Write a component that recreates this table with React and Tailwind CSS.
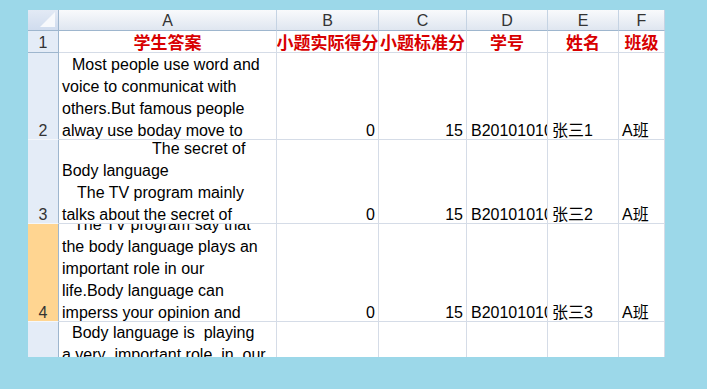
import React from "react";

const cols = ["A", "B", "C", "D", "E", "F"];
const heads = ["学生答案", "小题实际得分", "小题标准分", "学号", "姓名", "班级"];

const rows = [
  {
    n: 2,
    lines: [
      [10, "Most people use word and"],
      [0, "voice to conmunicat with"],
      [0, "others.But famous people"],
      [0, "alway use boday move to"],
    ],
    who: "张三1",
  },
  {
    n: 3,
    lines: [
      [90, "The secret of"],
      [0, "Body language"],
      [15, "The TV program mainly"],
      [0, "talks about the secret of"],
    ],
    who: "张三2",
  },
  {
    n: 4,
    hot: true,
    lines: [
      [12, "The TV program say that"],
      [0, "the body language plays an"],
      [0, "important role in our"],
      [0, "life.Body language can"],
      [0, "imperss your opinion and"],
    ],
    who: "张三3",
  },
];

const grid = "border-r border-b border-[#d5dce7]";
const font = { fontFamily: '"Liberation Sans", Arial, "Noto Sans CJK SC", sans-serif' };

function Line({ pad, text }) {
  return (
    <div className="shrink-0 whitespace-pre leading-[22px]" style={{ paddingLeft: pad }}>
      {text}
    </div>
  );
}

// bottom-aligned cell text, nudged down like the spreadsheet draws it
function Low({ children }) {
  return <span className="translate-y-[3px] whitespace-nowrap">{children}</span>;
}

export default function App() {
  return (
    <div className="w-[707px] h-[389px] bg-[#9cd8e9] pt-[10px] pl-[28px]" style={font}>
      <div className="grid w-[637px] h-[347px] overflow-hidden bg-white grid-cols-[31px_218px_102px_88px_81px_71px_46px] grid-rows-[21px_22px_87px_84px_98px_60px] text-[16px] text-black">
        {/* column headers */}
        <div className="relative border-r border-b border-[#9eb6ce] bg-gradient-to-b from-[#e3eaf5] to-[#d0dcee]">
          <svg className="absolute right-[3px] bottom-[3px]" width="15" height="15" viewBox="0 0 15 15">
            <polygon points="15,0 15,15 0,15" fill="#f7f9fc" />
          </svg>
        </div>
        {cols.map((c) => (
          <div
            key={c}
            className="flex items-center justify-center pt-[2px] border-r border-b border-r-[#c5d3e3] border-b-[#9eb6ce] bg-gradient-to-b from-[#f9fafc] to-[#dfe6f0] text-[16px] text-[#333]"
          >
            {c}
          </div>
        ))}

        {/* row 1 */}
        <div className="flex items-center justify-center pt-[2px] border-r border-b border-[#9eb6ce] bg-[#e4ecf7] text-[#333]">
          1
        </div>
        {heads.map((h) => (
          <div
            key={h}
            className={`flex items-center justify-center overflow-hidden whitespace-nowrap font-bold text-[17px] text-[#d80000] ${grid}`}
            style={{ fontFamily: '"Noto Sans CJK SC", sans-serif' }}
          >
            {h}
          </div>
        ))}

        {/* data rows */}
        {rows.map((r) => (
          <React.Fragment key={r.n}>
            <div
              className={`flex items-end justify-center border-r border-b border-r-[#9eb6ce] border-b-[#f4f7fb] leading-[22px] text-[#333] ${
                r.hot ? "bg-[#ffd591]" : "bg-[#e4ecf7]"
              }`}
            >
              <Low>{r.n}</Low>
            </div>
            <div className={`flex flex-col justify-end overflow-hidden pl-[3px] ${grid}`}>
              <div className="flex flex-col translate-y-[3px]">
                {r.lines.map(([p, t], i) => (
                  <Line key={i} pad={p} text={t} />
                ))}
              </div>
            </div>
            <div className={`flex items-end justify-end pr-[3px] leading-[22px] ${grid}`}>
              <Low>0</Low>
            </div>
            <div className={`flex items-end justify-end pr-[3px] leading-[22px] ${grid}`}>
              <Low>15</Low>
            </div>
            <div className={`flex items-end overflow-hidden pl-[4px] leading-[22px] ${grid}`}>
              <Low>B20101010101</Low>
            </div>
            <div className={`flex items-end pl-[4px] leading-[22px] ${grid}`}>
              <Low>{r.who}</Low>
            </div>
            <div className={`flex items-end pl-[3px] leading-[22px] ${grid}`}>
              <Low>A班</Low>
            </div>
          </React.Fragment>
        ))}

        {/* row 5, cut off by the window */}
        <div className="border-r border-[#9eb6ce] bg-[#e4ecf7]" />
        <div className={`flex flex-col overflow-hidden pl-[3px] ${grid}`}>
          <Line pad={10} text="Body language is  playing" />
          <Line pad={0} text="a very  important role  in  our" />
        </div>
        <div className={grid} />
        <div className={grid} />
        <div className={grid} />
        <div className={grid} />
        <div className={grid} />
      </div>
    </div>
  );
}
